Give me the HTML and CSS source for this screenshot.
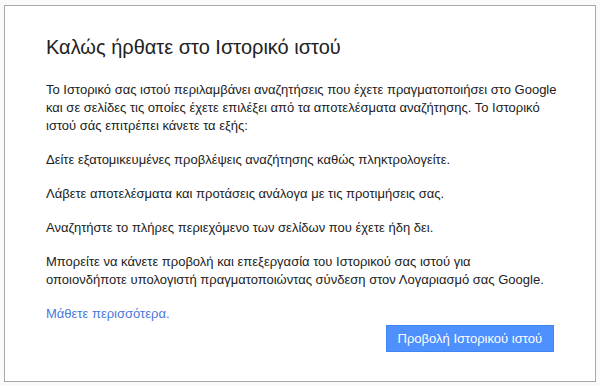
FILE: index.html
```html
<!DOCTYPE html>
<html lang="el">

<head>
    <meta charset="utf-8">
    <title>Ιστορικό ιστού</title>
    <link rel="stylesheet" href="styles.css">
</head>

<body>
    <!--DIALOG: ΚΑΛΩΣΟΡΙΣΜΑ ΣΤΟ ΙΣΤΟΡΙΚΟ-->
    <section class="dialog">
        <h1>Καλώς ήρθατε στο Ιστορικό ιστού</h1>
        <p class="intro">Το Ιστορικό σας ιστού περιλαμβάνει αναζητήσεις που έχετε πραγματοποιήσει στο Google και σε σελίδες τις οποίες έχετε επιλέξει από τα αποτελέσματα αναζήτησης. Το Ιστορικό ιστού σάς επιτρέπει κάνετε τα εξής:</p>
        <p>Δείτε εξατομικευμένες προβλέψεις αναζήτησης καθώς πληκτρολογείτε.</p>
        <p>Λάβετε αποτελέσματα και προτάσεις ανάλογα με τις προτιμήσεις σας.</p>
        <p>Αναζητήστε το πλήρες περιεχόμενο των σελίδων που έχετε ήδη δει.</p>
        <p>Μπορείτε να κάνετε προβολή και επεξεργασία του Ιστορικού σας ιστού για οποιονδήποτε υπολογιστή πραγματοποιώντας σύνδεση στον Λογαριασμό σας Google.</p>
        <p class="more"><a href="#">Μάθετε περισσότερα.</a></p>
        <div class="footer">
            <button>Προβολή Ιστορικού ιστού</button>
        </div>
    </section>
</body>

</html>
```

FILE: styles.css
```css
/*GENERELT*/
* {
    margin: 0;
    padding: 0;
    box-sizing: border-box;
}

body {
    background: #fafafa;
    padding: 5px 4px 4px 4px;
    font-family: 'Liberation Sans', Arial, sans-serif;
    color: #222;
}

/*DIALOG*/
.dialog {
    background: #fff;
    border: 1px solid #a9a9a9;
    width: 592px;
    height: 377px;
    padding: 29px 41px 29px 41px;
}

.dialog h1 {
    font-size: 20px;
    line-height: 24px;
    font-weight: normal;
    margin-bottom: 22px;
}

.dialog p {
    font-size: 13px;
    line-height: 18px;
    margin-bottom: 16px;
}

/*FØRSTE AFSNIT ER LIDT BREDERE*/
.dialog .intro {
    margin-right: -8px;
}

.dialog .more {
    margin-bottom: 2px;
}

.more a {
    color: #4a78dc;
    text-decoration: none;
}

/*KNAP*/
.footer {
    display: flex;
    justify-content: flex-end;
}

button {
    height: 27px;
    padding: 0 11px;
    background-color: #4d90fe;
    border: 1px solid #3f86f5;
    color: #fff;
    font-family: 'Liberation Sans', Arial, sans-serif;
    font-size: 13px;
}
```
